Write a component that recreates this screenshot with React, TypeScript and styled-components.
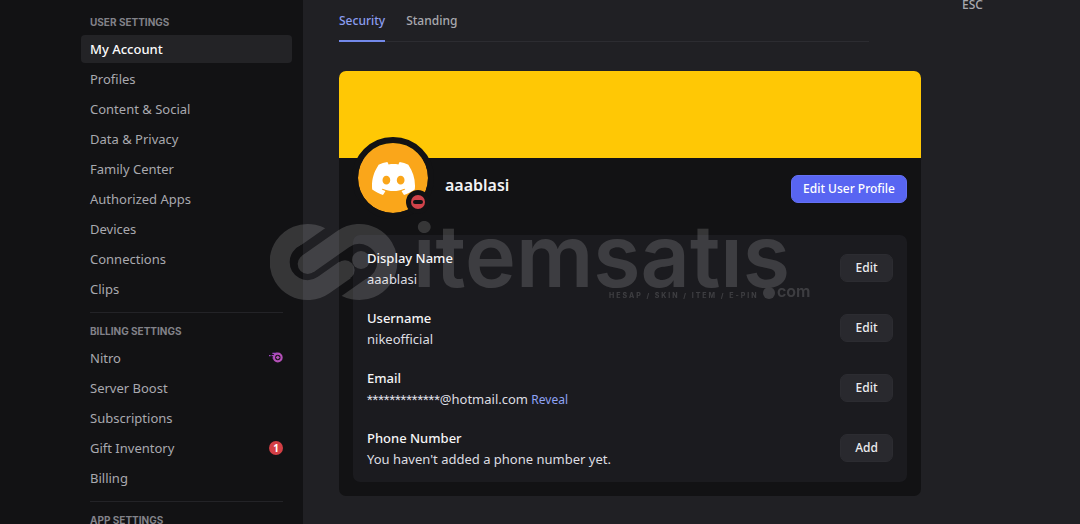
import React from "react";
import styled, { createGlobalStyle } from "styled-components";
import { SiDiscord } from "react-icons/si";

const GlobalStyle = createGlobalStyle`
  *, *::before, *::after { box-sizing: border-box; }
  html, body, #root { height: 100%; }
  body {
    margin: 0;
    background: #202024;
    color: #e8e8ea;
    font-family: "Noto Sans", "Open Sans", sans-serif;
    font-size: 13px;
    overflow: hidden;
  }
  button { font-family: inherit; cursor: pointer; }
  a { text-decoration: none; }
`;

const Page = styled.div`
  position: relative;
  display: grid;
  grid-template-columns: minmax(303px, 28%) minmax(0, 1fr);
  min-height: 100%;
`;

const Sidebar = styled.aside`
  display: flex;
  justify-content: flex-end;
  height: 100vh;
  overflow: hidden;
  padding: 13px 11px 0 0;
  background: #121214;
`;

const Nav = styled.nav`
  width: 211px;
`;

const NavHeading = styled.h2`
  margin: 0 0 4px;
  padding: 0 9px;
  font-family: Inter, "Noto Sans", sans-serif;
  font-size: 10px;
  line-height: 18px;
  font-weight: 700;
  text-transform: uppercase;
  color: #828289;
`;

const NavList = styled.ul`
  display: flex;
  flex-direction: column;
  gap: 2px;
  margin: 0;
  padding: 0;
  list-style: none;
`;

const NavLink = styled.a<{ $active?: boolean }>`
  display: flex;
  align-items: center;
  justify-content: space-between;
  height: 28px;
  padding: 0 9px;
  border-radius: 4px;
  font-size: 13px;
  line-height: 18px;
  font-weight: ${(p) => (p.$active ? 500 : 400)};
  color: ${(p) => (p.$active ? "#fbfbfb" : "#a9a9af")};
  background: ${(p) => (p.$active ? "#232326" : "transparent")};
`;

const Divider = styled.hr`
  height: 1px;
  margin: 9px;
  border: 0;
  background: #232327;
`;

const CountBadge = styled.span`
  width: 14px;
  height: 14px;
  border-radius: 7px;
  background: #d33f45;
  color: #fff;
  font-size: 10px;
  line-height: 14px;
  font-weight: 700;
  text-align: center;
`;

const Main = styled.main`
  display: grid;
  grid-template-columns: minmax(0, 582px) auto;
  justify-content: start;
  align-items: start;
  gap: 36px;
  padding-left: 36px;
`;

const Tabs = styled.div`
  display: flex;
  gap: 21px;
  height: 42px;
  margin: 0 52px 29px 0;
  box-shadow: inset 0 -1px 0 #2c2c31;
`;

const Tab = styled.button<{ $active?: boolean }>`
  padding: 2px 0 0;
  border: 0;
  border-bottom: 2px solid ${(p) => (p.$active ? "#7389ea" : "transparent")};
  background: none;
  font-size: 12px;
  line-height: 18px;
  font-weight: 500;
  color: ${(p) => (p.$active ? "#8b9df0" : "#a9a9af")};
`;

const Card = styled.section`
  overflow: hidden;
  border-radius: 7px;
  background: #121214;
`;

const Banner = styled.div`
  height: 87px;
  background: #ffc805;
`;

const ProfileRow = styled.header`
  display: flex;
  align-items: flex-start;
  height: 77px;
  padding: 0 14px 0 13px;
`;

const Avatar = styled.div`
  position: relative;
  display: grid;
  place-items: center;
  width: 82px;
  height: 82px;
  margin-top: -21px;
  border: 6px solid #121214;
  border-radius: 50%;
  background: #faa61a;
  background-clip: padding-box;
  color: #fff;
`;

const StatusDot = styled.svg`
  position: absolute;
  right: -2px;
  bottom: -1px;
`;

const ProfileName = styled.h1`
  flex: 1;
  margin: 15px 0 0 11px;
  font-size: 16px;
  line-height: 24px;
  font-weight: 600;
  color: #f3f3f4;
`;

const Button = styled.button<{ $primary?: boolean }>`
  height: 28px;
  min-width: 53px;
  padding: 0 11px;
  border: 1px solid ${(p) => (p.$primary ? "#6470f3" : "#2c2c31")};
  border-radius: 7px;
  background: ${(p) => (p.$primary ? "#5865f2" : "#29292e")};
  color: ${(p) => (p.$primary ? "#fff" : "#ececee")};
  font-size: 12px;
  line-height: 18px;
  font-weight: 500;
  white-space: nowrap;
`;

const ProfileAction = styled.div`
  margin-top: 17px;
`;

const Fields = styled.dl`
  display: flex;
  flex-direction: column;
  gap: 21px;
  margin: 0 14px 14px;
  padding: 14px;
  border-radius: 7px;
  background: #1b1b1f;
`;

const Field = styled.div`
  display: grid;
  grid-template-columns: minmax(0, 1fr) auto;
  grid-template-rows: 18px 18px;
  row-gap: 3px;
`;

const FieldLabel = styled.dt`
  line-height: 18px;
  font-weight: 500;
  color: #f5f5f6;
`;

const FieldValue = styled.dd`
  grid-row: 2;
  margin: 0;
  line-height: 18px;
  color: #dedee2;
`;

const MaskedPart = styled.span`
  font-family: Roboto, "Noto Sans", sans-serif;
`;

const FieldAction = styled.dd`
  grid-column: 2;
  grid-row: 1 / 3;
  margin: 5px 0 0;
`;

const Reveal = styled.a`
  font-size: 12px;
  color: #8fa3f5;
`;

const Escape = styled.button`
  padding: 0 5px;
  border: 0;
  background: none;
  font-size: 12px;
  line-height: 10px;
  font-weight: 500;
  color: #a9a9af;
`;

const Watermark = styled.svg`
  position: absolute;
  left: 270px;
  top: 215px;
  opacity: 0.15;
  pointer-events: none;
`;

function NitroIcon() {
  return (
    <svg width="14" height="12" viewBox="0 0 14 12" fill="none" aria-hidden="true">
      <circle cx="8.8" cy="5.5" r="3.8" stroke="#b450b8" strokeWidth="2.2" />
      <path d="M8.8 3.4 10.9 5.5 8.8 7.6 6.7 5.5Z" fill="#b450b8" />
      <path d="M3.4 1.4h5M2.6 3.6h2.6M3.4 6h1.6" stroke="#a048c4" strokeWidth="1.2" />
      <path d="M0 3.6h1.6" stroke="#a048c4" strokeWidth="1.2" />
    </svg>
  );
}

function ItemsatisMark() {
  return (
    <Watermark width="545" height="100" viewBox="0 0 545 100" fill="#fff" aria-hidden="true">
      <defs>
        <mask id="upperGap" maskUnits="userSpaceOnUse" x="0" y="0" width="440" height="300">
          <rect width="440" height="300" fill="#fff" />
          <path d="M143 147 336 12" stroke="#000" strokeWidth="116" />
        </mask>
        <mask id="lowerGap" maskUnits="userSpaceOnUse" x="0" y="0" width="440" height="300">
          <rect width="440" height="300" fill="#fff" />
          <path d="M105 270 298 135" stroke="#000" strokeWidth="116" />
        </mask>
      </defs>
      <g transform="translate(-10 0) scale(0.3333)" stroke="#fff" strokeWidth="60" fill="none">
        <path d="M203 82A84 84 0 0 0 59 141" mask="url(#upperGap)" />
        <path d="M59 141A84 84 0 0 0 191 210L255 165" />
        <circle cx="255" cy="165" r="29" fill="#fff" stroke="none" />
        <path d="M143 147 250 72A84 84 0 0 1 382 141" />
        <circle cx="143" cy="147" r="30" fill="#fff" stroke="none" />
        <path d="M382 141A84 84 0 0 1 238 200" mask="url(#lowerGap)" />
        <circle cx="303" cy="135" r="27" fill="#fff" stroke="none" />
      </g>
      <text x="143" y="72" fontFamily="Inter, sans-serif" fontSize="86" fontWeight="600">
        itemsatıs
      </text>
      <text
        x="339"
        y="83"
        fontFamily="Inter, sans-serif"
        fontSize="7"
        fontWeight="700"
        letterSpacing="2"
      >
        HESAP / SKIN / ITEM / E-PIN
      </text>
      <circle cx="499" cy="78" r="6" />
      <text x="507" y="82" fontFamily="Inter, sans-serif" fontSize="16" fontWeight="600">
        com
      </text>
    </Watermark>
  );
}

type NavEntry = { label: string; active?: boolean; extra?: React.ReactNode };

const userItems: NavEntry[] = [
  { label: "My Account", active: true },
  { label: "Profiles" },
  { label: "Content & Social" },
  { label: "Data & Privacy" },
  { label: "Family Center" },
  { label: "Authorized Apps" },
  { label: "Devices" },
  { label: "Connections" },
  { label: "Clips" },
];

const billingItems: NavEntry[] = [
  { label: "Nitro", extra: <NitroIcon /> },
  { label: "Server Boost" },
  { label: "Subscriptions" },
  { label: "Gift Inventory", extra: <CountBadge>1</CountBadge> },
  { label: "Billing" },
];

function NavGroup({ title, items }: { title: string; items: NavEntry[] }) {
  return (
    <>
      <NavHeading>{title}</NavHeading>
      <NavList>
        {items.map((item) => (
          <li key={item.label}>
            <NavLink href="#" $active={item.active} aria-current={item.active ? "page" : undefined}>
              {item.label}
              {item.extra}
            </NavLink>
          </li>
        ))}
      </NavList>
    </>
  );
}

const fields: { label: string; value: React.ReactNode; action: string }[] = [
  { label: "Display Name", value: "aaablasi", action: "Edit" },
  { label: "Username", value: "nikeofficial", action: "Edit" },
  {
    label: "Email",
    value: (
      <>
        <MaskedPart>*************</MaskedPart>@hotmail.com <Reveal href="#">Reveal</Reveal>
      </>
    ),
    action: "Edit",
  },
  { label: "Phone Number", value: "You haven't added a phone number yet.", action: "Add" },
];

export default function App() {
  return (
    <>
      <GlobalStyle />
      <Page>
        <Sidebar>
          <Nav aria-label="Settings">
            <NavGroup title="User Settings" items={userItems} />
            <Divider />
            <NavGroup title="Billing Settings" items={billingItems} />
            <Divider />
            <NavGroup title="App Settings" items={[]} />
          </Nav>
        </Sidebar>
        <Main>
          <div>
            <Tabs role="tablist">
              <Tab role="tab" aria-selected="true" $active>
                Security
              </Tab>
              <Tab role="tab" aria-selected="false">
                Standing
              </Tab>
            </Tabs>
            <Card>
              <Banner />
              <ProfileRow>
                <Avatar>
                  <SiDiscord size={43} aria-hidden="true" />
                  <StatusDot width="24" height="24" viewBox="0 0 24 24" role="img" aria-label="Do not disturb">
                    <circle cx="12" cy="12" r="12" fill="#121214" />
                    <circle cx="12" cy="12" r="7" fill="#d0434a" />
                    <rect x="7" y="10" width="10" height="4" rx="2" fill="#121214" />
                  </StatusDot>
                </Avatar>
                <ProfileName>aaablasi</ProfileName>
                <ProfileAction>
                  <Button $primary>Edit User Profile</Button>
                </ProfileAction>
              </ProfileRow>
              <Fields>
                {fields.map((field) => (
                  <Field key={field.label}>
                    <FieldLabel>{field.label}</FieldLabel>
                    <FieldValue>{field.value}</FieldValue>
                    <FieldAction>
                      <Button aria-label={`${field.action} ${field.label}`}>{field.action}</Button>
                    </FieldAction>
                  </Field>
                ))}
              </Fields>
            </Card>
          </div>
          <Escape>ESC</Escape>
        </Main>
        <ItemsatisMark />
      </Page>
    </>
  );
}
